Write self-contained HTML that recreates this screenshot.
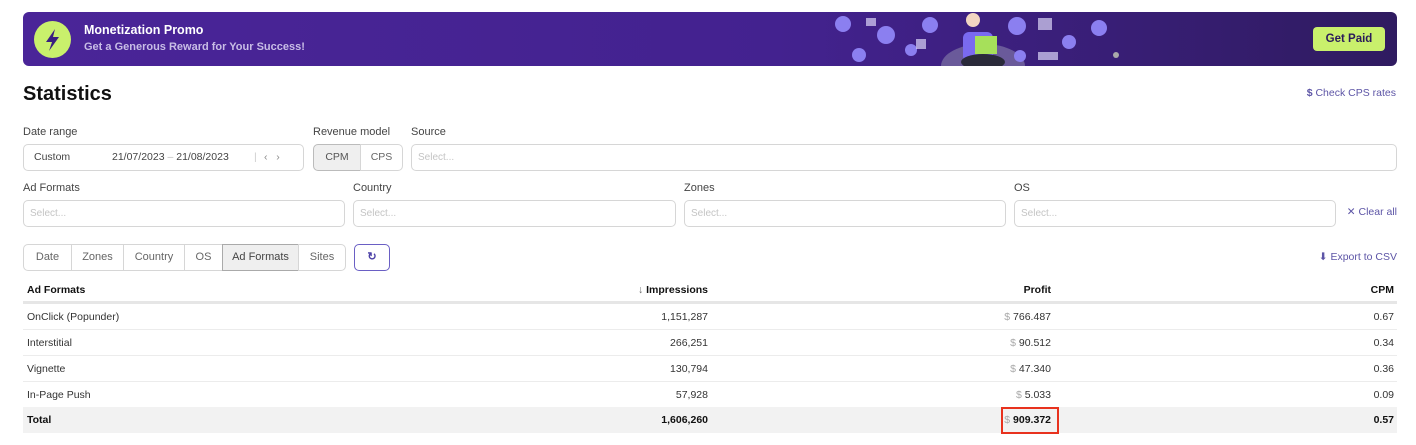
<!DOCTYPE html>
<html><head><style>
*{box-sizing:border-box;margin:0;padding:0}
body{width:1416px;height:445px;background:#fff;font-family:"Liberation Sans",sans-serif;color:#333;position:relative;overflow:hidden;font-size:11px}
.a{position:absolute}
.banner{left:23px;top:12px;width:1374px;height:54px;border-radius:6px;background:linear-gradient(90deg,#4a2598 0%,#43228f 55%,#2f1b60 100%);overflow:hidden}
.lbl{position:absolute;font-size:11px;color:#444}
.inp{position:absolute;border:1px solid #d6d6d6;border-radius:5px;height:27px;background:#fff;font-size:10px;color:#c4c4c4;padding-left:6px;line-height:25px}
.tab{position:absolute;top:244px;height:27px;border:1px solid #d6d6d6;font-size:11px;color:#666;text-align:center;line-height:25px}
.row{position:absolute;left:23px;width:1374px;height:26px;border-bottom:1px solid #ececec;font-size:10.5px;color:#333}
.row > span{position:absolute;top:7px}
.c1{left:4px}.c2{right:689px}.c3{right:346px}.c4{right:3px}
.d{color:#aaa}
</style></head><body>
<div class="a banner">
  <div class="a" style="left:11px;top:9px;width:37px;height:37px;border-radius:50%;background:#c9f06c"></div>
  <svg class="a" style="left:20px;top:16px" width="20" height="24" viewBox="0 0 20 24"><path d="M12 1 L3 14 H9 L6 23 L16 9 H10 Z" fill="#3a1f80"/></svg>
  <div class="a" style="left:61px;top:11px;color:#fff;font-weight:bold;font-size:12.5px">Monetization Promo</div>
  <div class="a" style="left:61px;top:29px;color:#c8bde6;font-weight:bold;font-size:11px">Get a Generous Reward for Your Success!</div>
  <svg class="a" style="left:800px;top:0" width="350" height="54">
    <ellipse cx="160" cy="54" rx="42" ry="22" fill="#6a5a9a"/>
    <circle cx="20" cy="12" r="8" fill="#8b7ff0"/><circle cx="63" cy="23" r="9" fill="#8b7ff0"/>
    <circle cx="36" cy="43" r="7" fill="#8b7ff0"/><circle cx="88" cy="38" r="6" fill="#8b7ff0"/>
    <circle cx="107" cy="13" r="8" fill="#8b7ff0"/><circle cx="194" cy="14" r="9" fill="#8b7ff0"/>
    <circle cx="197" cy="44" r="6" fill="#8b7ff0"/><circle cx="246" cy="30" r="7" fill="#8b7ff0"/>
    <circle cx="276" cy="16" r="8" fill="#8b7ff0"/><circle cx="293" cy="43" r="3" fill="#aaa"/>
    <rect x="140" y="20" width="30" height="30" rx="6" fill="#7a6af0"/>
    <circle cx="150" cy="8" r="7" fill="#f2d6c2"/><rect x="152" y="24" width="22" height="18" fill="#a6e05a"/>
    <ellipse cx="160" cy="50" rx="22" ry="8" fill="#2a2a3a"/>
    <rect x="215" y="6" width="14" height="12" fill="#dcd6f8" opacity=".7"/><rect x="43" y="6" width="10" height="8" fill="#dcd6f8" opacity=".7"/>
    <rect x="93" y="27" width="10" height="10" fill="#dcd6f8" opacity=".7"/><rect x="215" y="40" width="20" height="8" fill="#dcd6f8" opacity=".7"/>
  </svg>
  <div class="a" style="left:1290px;top:15px;width:72px;height:24px;border-radius:4px;background:#c9f06c;color:#2a1a5a;font-weight:bold;font-size:11.5px;text-align:center;line-height:24px">Get Paid</div>
</div>
<div class="a" style="left:23px;top:83px;font-size:20px;font-weight:bold;color:#111">Statistics</div>
<div class="a" style="right:20px;top:87px;font-size:10.5px;color:#5d55a6"><b>$</b> Check CPS rates</div>

<div class="lbl" style="left:23px;top:126px">Date range</div>
<div class="lbl" style="left:313px;top:126px">Revenue model</div>
<div class="lbl" style="left:411px;top:126px">Source</div>
<div class="inp" style="left:23px;top:144px;width:281px;color:#444;font-size:10.5px;padding-left:10px">Custom<span class="a" style="left:88px">21/07/2023 <span style="color:#bbb">–</span> 21/08/2023</span><span class="a" style="left:230px;color:#ccc">|</span><span class="a" style="left:240px;color:#888">‹ &nbsp; ›</span></div>
<div class="inp" style="left:313px;top:144px;width:48px;background:#efefef;color:#555;border-color:#bbb;border-radius:5px 0 0 5px;text-align:center;padding:0;font-size:10.5px">CPM</div>
<div class="inp" style="left:360px;top:144px;width:43px;color:#666;border-radius:0 5px 5px 0;text-align:center;padding:0;font-size:10.5px">CPS</div>
<div class="inp" style="left:411px;top:144px;width:986px">Select...</div>

<div class="lbl" style="left:23px;top:182px">Ad Formats</div>
<div class="lbl" style="left:353px;top:182px">Country</div>
<div class="lbl" style="left:684px;top:182px">Zones</div>
<div class="lbl" style="left:1014px;top:182px">OS</div>
<div class="inp" style="left:23px;top:200px;width:322px">Select...</div>
<div class="inp" style="left:353px;top:200px;width:323px">Select...</div>
<div class="inp" style="left:684px;top:200px;width:322px">Select...</div>
<div class="inp" style="left:1014px;top:200px;width:322px">Select...</div>
<div class="a" style="right:19px;top:206px;font-size:10.5px;color:#5d55a6">✕ Clear all</div>

<div class="tab" style="left:23px;width:49px;border-radius:5px 0 0 5px">Date</div>
<div class="tab" style="left:71px;width:53px">Zones</div>
<div class="tab" style="left:123px;width:62px">Country</div>
<div class="tab" style="left:184px;width:39px">OS</div>
<div class="tab" style="left:222px;width:77px;background:#efefef;border-color:#aaa;color:#444">Ad Formats</div>
<div class="tab" style="left:298px;width:48px;border-radius:0 5px 5px 0">Sites</div>
<div class="tab" style="left:354px;width:36px;border-color:#6a5fc4;border-radius:5px;color:#4a3fa6;font-weight:bold">↻</div>
<div class="a" style="right:19px;top:251px;font-size:10.5px;color:#5d55a6">⬇ Export to CSV</div>

<div class="row" style="top:279px;border-bottom:3px solid #e6e6e6;font-weight:bold;color:#111;height:25px"><span class="c1" style="top:5px">Ad Formats</span><span class="c2" style="top:5px"><span style="font-weight:normal;color:#666">↓</span> Impressions</span><span class="c3" style="top:5px">Profit</span><span class="c4" style="top:5px">CPM</span></div>
<div class="row" style="top:304px"><span class="c1">OnClick (Popunder)</span><span class="c2">1,151,287</span><span class="c3"><span class="d">$</span> 766.487</span><span class="c4">0.67</span></div>
<div class="row" style="top:330px"><span class="c1">Interstitial</span><span class="c2">266,251</span><span class="c3"><span class="d">$</span> 90.512</span><span class="c4">0.34</span></div>
<div class="row" style="top:356px"><span class="c1">Vignette</span><span class="c2">130,794</span><span class="c3"><span class="d">$</span> 47.340</span><span class="c4">0.36</span></div>
<div class="row" style="top:382px"><span class="c1">In-Page Push</span><span class="c2">57,928</span><span class="c3"><span class="d">$</span> 5.033</span><span class="c4">0.09</span></div>
<div class="row" style="top:407px;background:#f2f2f2;font-weight:bold;color:#111;border:none"><span class="c1">Total</span><span class="c2">1,606,260</span><span class="c3"><span class="d" style="font-weight:normal">$</span> 909.372</span><span class="c4">0.57</span></div>
<div class="a" style="left:1001px;top:407px;width:58px;height:27px;border:2px solid #e8321e"></div>
</body></html>
